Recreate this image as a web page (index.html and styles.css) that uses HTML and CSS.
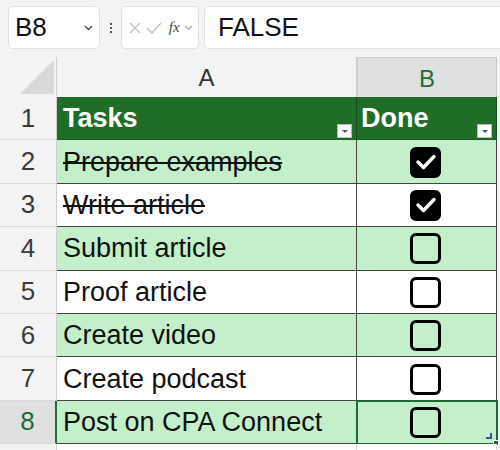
FILE: index.html
```html
<!DOCTYPE html>
<html>
<head>
<meta charset="utf-8">
<link rel="stylesheet" href="styles.css">
</head>
<body>
<div class="toolbar">
  <div class="namebox"><span class="nb-text">B8</span>
    <svg class="chev" width="9" height="6" viewBox="0 0 9 6"><path d="M1 1 L4.5 4.5 L8 1" fill="none" stroke="#444" stroke-width="1.3"/></svg>
  </div>
  <div class="dots"><i></i><i></i><i></i></div>
  <div class="fxbox">
    <svg width="14" height="14" viewBox="0 0 14 14"><path d="M2 2 L12 12 M12 2 L2 12" stroke="#c4c4c4" stroke-width="1.4"/></svg>
    <svg width="16" height="12" viewBox="0 0 16 12"><path d="M1 6 L6 11 L15 1" fill="none" stroke="#c4c4c4" stroke-width="1.4"/></svg>
    <span class="fx">fx</span>
    <svg width="9" height="6" viewBox="0 0 9 6"><path d="M1 1 L4.5 4.5 L8 1" fill="none" stroke="#aaa" stroke-width="1.2"/></svg>
  </div>
  <div class="formula">FALSE</div>
</div>
<div class="sheet">
  <div class="corner"><div class="tri"></div></div>
  <div class="colhead">A</div>
  <div class="colhead sel">B</div>
  <div class="edge"></div>

  <div class="rowhead">1</div>
  <div class="cell th">Tasks<span class="filter"></span></div>
  <div class="cell th b">Done<span class="filter"></span></div>
  <div class="edge"></div>

  <div class="rowhead">2</div>
  <div class="cell band done">Prepare examples</div>
  <div class="cell band b"><span class="cb on"><svg width="22" height="18" viewBox="0 0 22 18"><path d="M3 9 L8.5 14.5 L19 3.5" fill="none" stroke="#fff" stroke-width="3.4" stroke-linecap="round" stroke-linejoin="round"/></svg></span></div>
  <div class="edge"></div>

  <div class="rowhead">3</div>
  <div class="cell done">Write article</div>
  <div class="cell b"><span class="cb on"><svg width="22" height="18" viewBox="0 0 22 18"><path d="M3 9 L8.5 14.5 L19 3.5" fill="none" stroke="#fff" stroke-width="3.4" stroke-linecap="round" stroke-linejoin="round"/></svg></span></div>
  <div class="edge"></div>

  <div class="rowhead">4</div>
  <div class="cell band">Submit article</div>
  <div class="cell band b"><span class="cb"></span></div>
  <div class="edge"></div>

  <div class="rowhead">5</div>
  <div class="cell">Proof article</div>
  <div class="cell b"><span class="cb"></span></div>
  <div class="edge"></div>

  <div class="rowhead">6</div>
  <div class="cell band">Create video</div>
  <div class="cell band b"><span class="cb"></span></div>
  <div class="edge"></div>

  <div class="rowhead">7</div>
  <div class="cell">Create podcast</div>
  <div class="cell b"><span class="cb"></span></div>
  <div class="edge"></div>

  <div class="rowhead selrow">8</div>
  <div class="cell band">Post on CPA Connect</div>
  <div class="cell band b active"><span class="cb"></span><span class="handle"></span><span class="fillmark"></span></div>
  <div class="edge"></div>

  <div class="rowhead"></div>
  <div class="cell blank"></div>
  <div class="cell blank"></div>
  <div class="edge"></div>
</div>
</body>
</html>
```

FILE: styles.css
```css
* { box-sizing: border-box; }
html, body { margin: 0; padding: 0; }
body {
  width: 500px;
  height: 450px;
  overflow: hidden;
  background: #f3f3f3;
  font-family: "Liberation Sans", Arial, sans-serif;
  color: #111;
}
.toolbar {
  display: flex;
  align-items: flex-start;
  height: 57px;
  padding: 6px 0 0 8px;
}
.namebox {
  width: 92px;
  height: 43px;
  background: #fff;
  border: 1px solid #e2e2e2;
  border-radius: 5px;
  display: flex;
  align-items: center;
  justify-content: space-between;
  padding: 0 6px 0 6px;
}
.nb-text { font-size: 26px; color: #111; }
.dots {
  width: 21px;
  height: 43px;
  display: flex;
  flex-direction: column;
  align-items: center;
  justify-content: center;
  gap: 2px;
}
.dots i {
  display: block;
  width: 2px;
  height: 2px;
  background: #555;
}
.fxbox {
  width: 78px;
  height: 43px;
  background: #fff;
  border: 1px solid #e2e2e2;
  border-radius: 5px;
  display: flex;
  align-items: center;
  justify-content: space-between;
  padding: 0 5px 0 6px;
}
.fx {
  font-family: "Liberation Serif", "DejaVu Serif", serif;
  font-style: italic;
  font-size: 15px;
  color: #444;
  margin-left: 2px;
}
.formula {
  flex: 1;
  height: 43px;
  margin-left: 5px;
  background: #fff;
  border: 1px solid #e2e2e2;
  border-right: none;
  border-radius: 5px 0 0 5px;
  font-size: 26px;
  line-height: 41px;
  padding-left: 13px;
}
.sheet {
  display: grid;
  grid-template-columns: 57px 300px 140px 3px;
  grid-template-rows: 40px repeat(8, 43.4px) 10px;
  background: #fff;
}
.corner {
  background: #f3f3f3;
  border-right: 1px solid #d0d0d0;
  position: relative;
}
.tri {
  position: absolute;
  right: 2px;
  bottom: 3px;
  width: 0;
  height: 0;
  border-left: 34px solid transparent;
  border-bottom: 34px solid #d9d9d9;
}
.colhead {
  background: #f3f3f3;
  border-right: 1px solid #d0d0d0;
  font-size: 24px;
  color: #333;
  display: flex;
  align-items: center;
  justify-content: center;
  padding-top: 2px;
}
.colhead.sel {
  background: #e0e0e0;
  color: #1e6b38;
  border-top: 1px solid #cfcfcf;
  border-right: 1px solid #c8c8c8;
  border-left: 1px solid #c8c8c8;
}
.edge { background: #f3f3f3; }
.rowhead {
  background: #f3f3f3;
  border-bottom: 1px solid #dadada;
  border-right: 1px solid #cfcfcf;
  font-size: 26px;
  color: #3a3a3a;
  display: flex;
  align-items: center;
  justify-content: center;
}
.rowhead.selrow {
  background: #e0e0e0;
  color: #1e6b38;
  border-right: 2px solid #1e6b38;
}
.cell {
  position: relative;
  background: #fff;
  border-bottom: 1px solid #444;
  border-right: 1px solid #444;
  font-size: 27px;
  display: flex;
  align-items: center;
  padding-left: 6px;
  padding-top: 1px;
  white-space: nowrap;
}
.cell.band { background: #c3efcb; }
.cell.th {
  background: #1f6d27;
  color: #fff;
  font-weight: bold;
  border-bottom: 1px solid #1a5a20;
  border-right: 1px solid #174e1c;
}
.cell.b { justify-content: center; padding-left: 0; }
.cell.th.b { justify-content: flex-start; padding-left: 4px; }
.cell.done { text-decoration: line-through; text-decoration-thickness: 2px; }
.cell.blank { border-bottom: none; border-right: 1px solid #dadada; }
.filter {
  position: absolute;
  right: 4px;
  bottom: 1px;
  width: 15px;
  height: 14px;
  background: #fff;
  border: 1px solid #bbb;
}
.filter::after {
  content: "";
  position: absolute;
  left: 4px;
  top: 5px;
  border-left: 3px solid transparent;
  border-right: 3px solid transparent;
  border-top: 3px solid #555;
}
.cb {
  width: 31px;
  height: 31px;
  border: 3px solid #000;
  border-radius: 6px;
  display: flex;
  align-items: center;
  justify-content: center;
  margin-left: -2px;
}
.cb.on { background: #000; }
.cell.active {
  outline: 2px solid #1e6b38;
  outline-offset: -1px;
}
.handle {
  position: absolute;
  right: -3px;
  bottom: -3px;
  width: 6px;
  height: 6px;
  background: #1e6b38;
  border: 1px solid #fff;
}
.fillmark {
  position: absolute;
  right: 4px;
  bottom: 4px;
  width: 6px;
  height: 6px;
  border-right: 2px solid #3b4fb0;
  border-bottom: 2px solid #3b4fb0;
}
```
